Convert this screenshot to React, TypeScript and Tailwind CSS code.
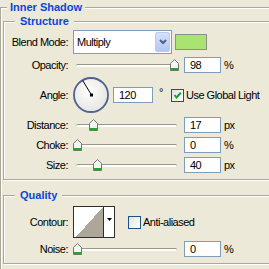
import React from "react";

const etched = "border border-[#aca899] shadow-[inset_1px_1px_0_#fff,1px_1px_0_#fff]";

function Legend({ className, children }: { className: string; children: React.ReactNode }) {
  return (
    <span
      className={`absolute -top-[8px] bg-[#ece9d8] text-[11px] leading-[14px] font-bold tracking-[0px] text-[#0a46da] ${className}`}
    >
      {children}
    </span>
  );
}

function Label({ children }: { children: React.ReactNode }) {
  return <span className="w-[64px] shrink-0 text-right">{children}</span>;
}

function Field({ value, className = "w-[37px]" }: { value: string; className?: string }) {
  return (
    <div className={`flex h-[16px] shrink-0 items-center border border-[#7f9db9] bg-white pl-[5px] ${className}`}>
      {value}
    </div>
  );
}

function Thumb({ at }: { at: number }) {
  return (
    <svg width="9" height="12" viewBox="0 0 9 12" className="absolute top-[2px]" style={{ left: at }}>
      <path d="M4.5 0.5 L8.5 4.5 V11.5 H0.5 V4.5 Z" fill="#f5f5f2" stroke="#6f766f" />
      <rect x="1" y="9" width="7" height="2" fill="#22a52a" />
    </svg>
  );
}

function Slider({ at }: { at: number }) {
  return (
    <div className="relative ml-[5px] h-full w-[106px] shrink-0">
      <div className="absolute left-[3px] top-[7px] h-[3px] w-[101px] rounded-full bg-white shadow-[inset_0_1px_0_#9b988b]" />
      <Thumb at={at} />
    </div>
  );
}

function Check({ checked }: { checked?: boolean }) {
  return (
    <span className="flex h-[13px] w-[13px] shrink-0 items-center justify-center border border-[#1c5180] bg-linear-to-br from-[#e2e2dc] to-white">
      {checked && (
        <svg width="9" height="9" viewBox="0 0 9 9">
          <path d="M1.5 4 L3.5 6.5 L7.8 1.8" stroke="#21a121" strokeWidth="2" fill="none" />
        </svg>
      )}
    </span>
  );
}

function SliderRow({ label, at, value, unit }: { label: string; at: number; value: string; unit: string }) {
  return (
    <div className="mt-[4px] flex h-[16px] items-center">
      <Label>{label}</Label>
      <Slider at={at} />
      <div className="ml-[5px]">
        <Field value={value} />
      </div>
      <span className="ml-[3px]">{unit}</span>
    </div>
  );
}

export default function App() {
  return (
    <div className="h-[269px] w-[269px] overflow-hidden bg-[#ece9d8] font-['Liberation_Sans',Arial,sans-serif] text-[11px] leading-[14px] tracking-[-0.5px] text-black">
      <div className={`relative mt-[7px] h-[300px] w-[300px] ${etched}`}>
        <Legend className="left-[6px] px-[3px]">Inner Shadow</Legend>

        {/* Structure */}
        <div className={`relative ml-[2px] mt-[13px] w-[290px] pb-[6px] ${etched}`}>
          <Legend className="left-[11px] px-[5px]">Structure</Legend>

          <div className="mt-[8px] flex h-[24px] items-center">
            <Label>Blend Mode:</Label>
            <div className="ml-[5px] flex h-[24px] w-[99px] shrink-0 border border-[#7f9db9] bg-white p-[1px]">
              <span className="flex flex-1 items-center pl-[2px] text-[11px]">Multiply</span>
              <span className="flex w-[15px] items-center justify-center rounded-[2px] border border-[#b9cbf3] bg-linear-to-b from-[#d6e1fc] to-[#b3c7f5]">
                <svg width="8" height="6" viewBox="0 0 8 6">
                  <path d="M1 1 L4 4 L7 1" stroke="#4d6185" strokeWidth="2" fill="none" />
                </svg>
              </span>
            </div>
            <div className="ml-[3px] h-[16px] w-[32px] shrink-0 border border-[#8e8e8e] bg-[#a9e473]" />
          </div>

          <div className="mt-[3px] flex h-[16px] items-center">
            <Label>Opacity:</Label>
            <Slider at={97} />
            <div className="ml-[5px]">
              <Field value="98" />
            </div>
            <span className="ml-[3px]">%</span>
          </div>

          <div className="mt-[4px] flex h-[36px] items-center">
            <Label>Angle:</Label>
            <svg width="36" height="36" viewBox="0 0 36 36" className="ml-[5px] shrink-0">
              <defs>
                <radialGradient id="dial" cx="0.45" cy="0.4" r="0.65">
                  <stop offset="0" stopColor="#ffffff" />
                  <stop offset="1" stopColor="#e3e3df" />
                </radialGradient>
              </defs>
              <circle cx="18" cy="18" r="17" fill="url(#dial)" stroke="#4f6290" strokeWidth="1.8" />
              <line x1="18.5" y1="18" x2="9.7" y2="3.5" stroke="#000" strokeWidth="1" />
              <rect x="17" y="16.5" width="3" height="3" fill="#000" />
            </svg>
            <div className="ml-[4px]">
              <Field value="120" className="w-[40px]" />
            </div>
            <span className="ml-[6px] w-[12px] self-start pt-[8px]">°</span>
            <Check checked />
            <span className="ml-[2px]">Use Global Light</span>
          </div>

          <SliderRow label="Distance:" at={16} value="17" unit="px" />
          <SliderRow label="Choke:" at={0} value="0" unit="%" />
          <SliderRow label="Size:" at={20} value="40" unit="px" />
        </div>

        {/* Quality */}
        <div className={`relative ml-[2px] mt-[15px] w-[290px] pb-[6px] ${etched}`}>
          <Legend className="left-[11px] px-[5px]">Quality</Legend>

          <div className="mt-[10px] flex h-[32px] items-center">
            <Label>Contour:</Label>
            <div className="ml-[5px] flex h-[32px] w-[42px] shrink-0 border border-[#2e2e2e] bg-white">
              <svg width="29" height="30" viewBox="0 0 29 30" className="shrink-0" shapeRendering="crispEdges">
                <polygon points="2,30 29,0 29,30" fill="#aca798" />
              </svg>
              <div className="flex flex-1 justify-center border-l border-[#2e2e2e] pt-[11px]">
                <svg width="5" height="3" viewBox="0 0 5 3">
                  <polygon points="0,0 5,0 2.5,3" fill="#000" />
                </svg>
              </div>
            </div>
            <div className="ml-[13px]">
              <Check />
            </div>
            <span className="ml-[2px]">Anti-aliased</span>
          </div>

          <div className="mt-[3px] flex h-[16px] items-center">
            <Label>Noise:</Label>
            <Slider at={0} />
            <div className="ml-[5px]">
              <Field value="0" />
            </div>
            <span className="ml-[3px]">%</span>
          </div>
        </div>
      </div>
    </div>
  );
}
